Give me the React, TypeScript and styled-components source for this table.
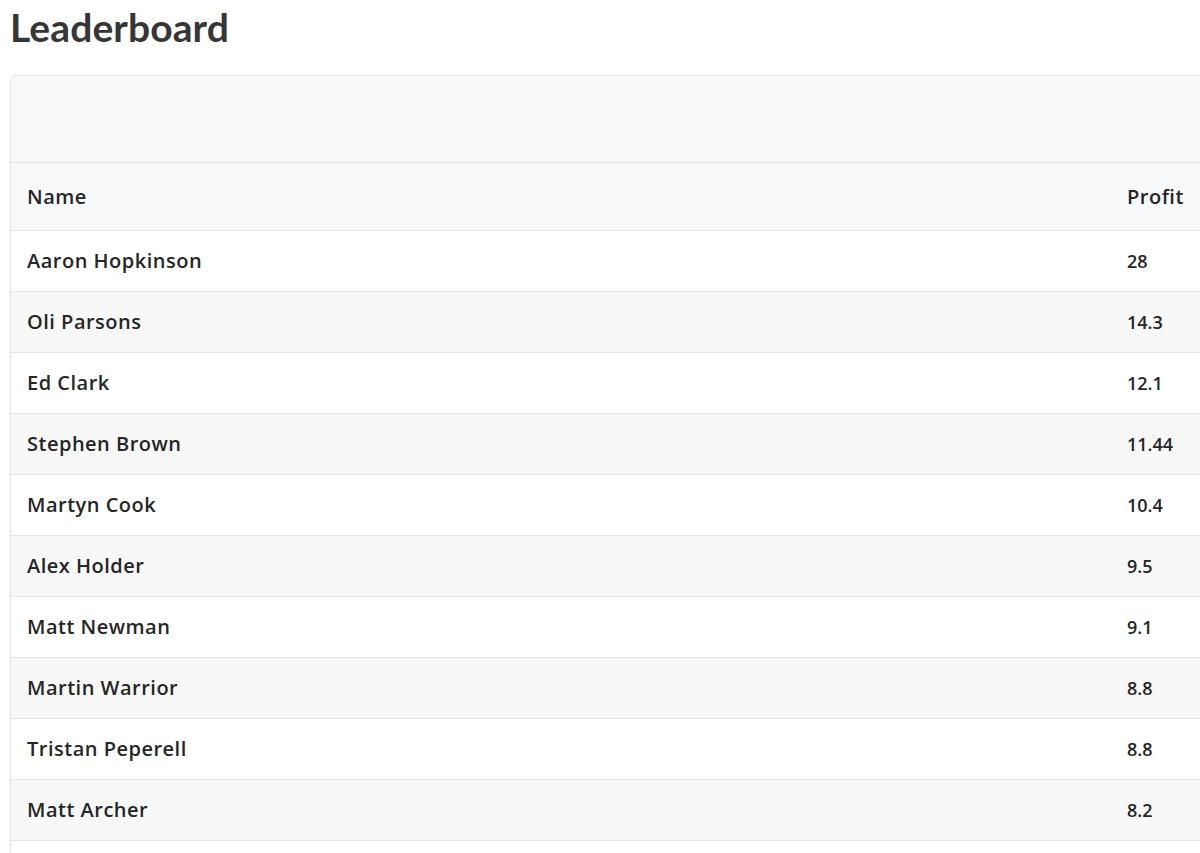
import React from 'react';
import styled, { createGlobalStyle } from 'styled-components';

interface Entry {
  name: string;
  profit: string;
}

const entries: Entry[] = [
  { name: 'Aaron Hopkinson', profit: '28' },
  { name: 'Oli Parsons', profit: '14.3' },
  { name: 'Ed Clark', profit: '12.1' },
  { name: 'Stephen Brown', profit: '11.44' },
  { name: 'Martyn Cook', profit: '10.4' },
  { name: 'Alex Holder', profit: '9.5' },
  { name: 'Matt Newman', profit: '9.1' },
  { name: 'Martin Warrior', profit: '8.8' },
  { name: 'Tristan Peperell', profit: '8.8' },
  { name: 'Matt Archer', profit: '8.2' },
];

const GlobalStyle = createGlobalStyle`
  html, body {
    margin: 0;
    padding: 0;
    background: #fff;
    overflow: hidden;
  }
  body {
    font-family: "Open Sans", Lato, "Liberation Sans", sans-serif;
    color: #222;
  }
`;

const Page = styled.div`
  padding: 0 0 0 10px;
  width: 1200px;
`;

const Title = styled.h1`
  margin: 0;
  padding-top: 4px;
  height: 71px;
  font-family: Lato, "Open Sans", sans-serif;
  font-size: 39px;
  font-weight: 700;
  letter-spacing: 0.1px;
  color: #363636;
`;

const Card = styled.div`
  width: 1210px;
  padding-bottom: 40px;
  border: 1px solid #e2e3e6;
  border-radius: 5px 0 0 0;
  overflow: hidden;
`;

const CardHeader = styled.div`
  height: 86px;
  background: #f8f9fb;
  border-bottom: 1px solid #e2e3e6;
`;

const Row = styled.div<{ $variant: 'head' | 'odd' | 'even' }>`
  display: grid;
  grid-template-columns: 1fr 94px;
  align-items: center;
  height: ${({ $variant }) => ($variant === 'head' ? '67px' : '60px')};
  padding-left: 16px;
  border-bottom: 1px solid #e3e3e3;
  background: ${({ $variant }) =>
    $variant === 'head' ? '#f8f9fb' : $variant === 'even' ? '#f8f8f8' : '#fff'};
`;

const Cell = styled.span<{ $num?: boolean }>`
  font-size: ${({ $num }) => ($num ? '18px' : '20px')};
  font-weight: 600;
  letter-spacing: ${({ $num }) => ($num ? '0' : '0.5px')};
  line-height: 1;
  color: #262626;
`;

export default function App() {
  return (
    <Page>
      <GlobalStyle />
      <Title>Leaderboard</Title>
      <Card>
        <CardHeader />
        <Row $variant="head">
          <Cell>Name</Cell>
          <Cell>Profit</Cell>
        </Row>
        {entries.map((e, i) => (
          <Row key={e.name} $variant={i % 2 === 0 ? 'odd' : 'even'}>
            <Cell>{e.name}</Cell>
            <Cell $num>{e.profit}</Cell>
          </Row>
        ))}
      </Card>
    </Page>
  );
}
